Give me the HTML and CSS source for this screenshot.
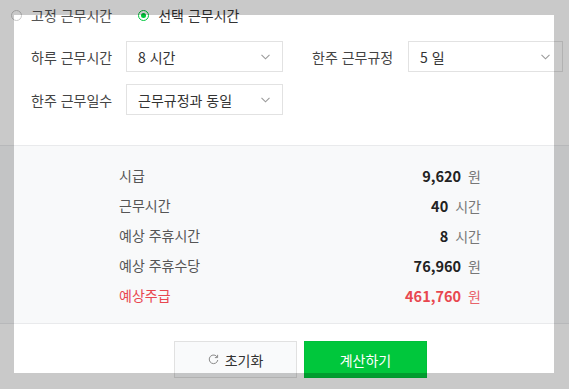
FILE: index.html
```html
<!DOCTYPE html>
<html lang="ko">
<head>
<meta charset="utf-8">
<link rel="stylesheet" href="styles.css">
</head>
<body>
<div class="page">
  <div class="radios">
    <label class="radio"><span class="dot"></span><span>고정 근무시간</span></label>
    <label class="radio on"><span class="dot"></span><span>선택 근무시간</span></label>
  </div>
  <div class="form">
    <div class="row">
      <span class="label">하루 근무시간</span>
      <div class="select"><span>8 시간</span><svg class="chev" width="9" height="6" viewBox="0 0 9 6"><path d="M0.5 0.8 L4.5 4.8 L8.5 0.8" fill="none" stroke="#9a9a9a" stroke-width="1.1"/></svg></div>
      <span class="label label2">한주 근무규정</span>
      <div class="select select2"><span>5 일</span><svg class="chev" width="9" height="6" viewBox="0 0 9 6"><path d="M0.5 0.8 L4.5 4.8 L8.5 0.8" fill="none" stroke="#9a9a9a" stroke-width="1.1"/></svg></div>
    </div>
    <div class="row">
      <span class="label">한주 근무일수</span>
      <div class="select"><span>근무규정과 동일</span><svg class="chev" width="9" height="6" viewBox="0 0 9 6"><path d="M0.5 0.8 L4.5 4.8 L8.5 0.8" fill="none" stroke="#9a9a9a" stroke-width="1.1"/></svg></div>
    </div>
  </div>
  <div class="results">
    <div class="res"><span class="rl">시급</span><span class="rv"><b>9,620</b><span class="unit">원</span></span></div>
    <div class="res"><span class="rl">근무시간</span><span class="rv"><b>40</b><span class="unit">시간</span></span></div>
    <div class="res"><span class="rl">예상 주휴시간</span><span class="rv"><b>8</b><span class="unit">시간</span></span></div>
    <div class="res"><span class="rl">예상 주휴수당</span><span class="rv"><b>76,960</b><span class="unit">원</span></span></div>
    <div class="res total"><span class="rl">예상주급</span><span class="rv"><b>461,760</b><span class="unit">원</span></span></div>
  </div>
  <div class="buttons">
    <button class="btn reset"><svg width="11" height="11" viewBox="0 0 11 11"><path d="M9.3 3.2 A4.3 4.3 0 1 0 9.8 6" fill="none" stroke="#8a8a8a" stroke-width="1"/><path d="M9.6 0.8 L9.6 3.6 L6.9 3.6" fill="none" stroke="#8a8a8a" stroke-width="1"/></svg><span>초기화</span></button>
    <button class="btn calc">계산하기</button>
  </div>
  <div class="spotlight"></div>
</div>
</body>
</html>
```
FILE: styles.css
```css
* { box-sizing: border-box; }
html, body { margin: 0; padding: 0; }
body {
  width: 569px;
  height: 389px;
  overflow: hidden;
  background: #fff;
  font-family: "Noto Sans CJK KR", "Noto Sans", sans-serif;
  color: #333;
  font-size: 14px;
}
.page { position: relative; width: 569px; height: 389px; }
.radios {
  height: 30px;
  display: flex;
  align-items: center;
  padding-left: 11px;
  gap: 26px;
}
.radio { display: flex; align-items: center; gap: 9px; color: #555; font-size: 14px; }
.radio.on { color: #333; }
.dot {
  width: 11px; height: 11px;
  border: 1px solid #c9c9c9;
  border-radius: 50%;
  display: inline-flex; align-items: center; justify-content: center;
  background: #fff;
}
.radio.on .dot { border-color: #00c73c; }
.radio.on .dot::after {
  content: ""; width: 5px; height: 5px; border-radius: 50%; background: #00c73c;
}
.form { margin-top: 11px; display: flex; flex-direction: column; gap: 12px; }
.row { display: flex; align-items: center; padding-left: 31px; }
.label { width: 95px; font-size: 14px; color: #444; }
.label2 { margin-left: 29px; width: 96px; }
.select {
  width: 157px; height: 31px;
  border: 1px solid #e2e2e2;
  background: #fff;
  display: flex; align-items: center; justify-content: space-between;
  padding: 0 12px 0 11px;
  font-size: 14px; color: #333;
}
.select2 { width: 155px; }
.chev { display: block; }
.results {
  margin-top: 30px;
  border-top: 1px solid #e9eaec;
  border-bottom: 1px solid #e9eaec;
  background: #f8f9fa;
  padding: 14px 88px 13px 119px;
}
.res { height: 30px; display: flex; align-items: center; justify-content: space-between; }
.rl { color: #555; font-size: 14px; }
.rv { display: flex; align-items: baseline; }
.rv b { font-weight: 700; color: #222; font-size: 14.5px; }
.unit { margin-left: 7px; color: #777; font-size: 14px; }
.total .rl, .total .rv b, .total .unit { color: #e8474f; }
.total .unit { color: #e8646a; }
.buttons { margin-top: 17px; display: flex; gap: 7px; padding-left: 174px; }
.btn {
  width: 123px; height: 37px;
  font-family: inherit; font-size: 14px;
  display: flex; align-items: center; justify-content: center;
  border-radius: 0;
}
.reset { background: #f9fafb; border: 1px solid #e1e1e1; color: #333; gap: 6px; }
.reset svg { display: block; }
.calc { background: #00c73c; border: 1px solid #00c03a; color: #fff; }
.spotlight {
  position: absolute;
  left: 14px; top: 15px;
  width: 540px; height: 358px;
  box-shadow: 0 0 0 700px rgba(0, 0, 0, 0.21);
  pointer-events: none;
}
```
